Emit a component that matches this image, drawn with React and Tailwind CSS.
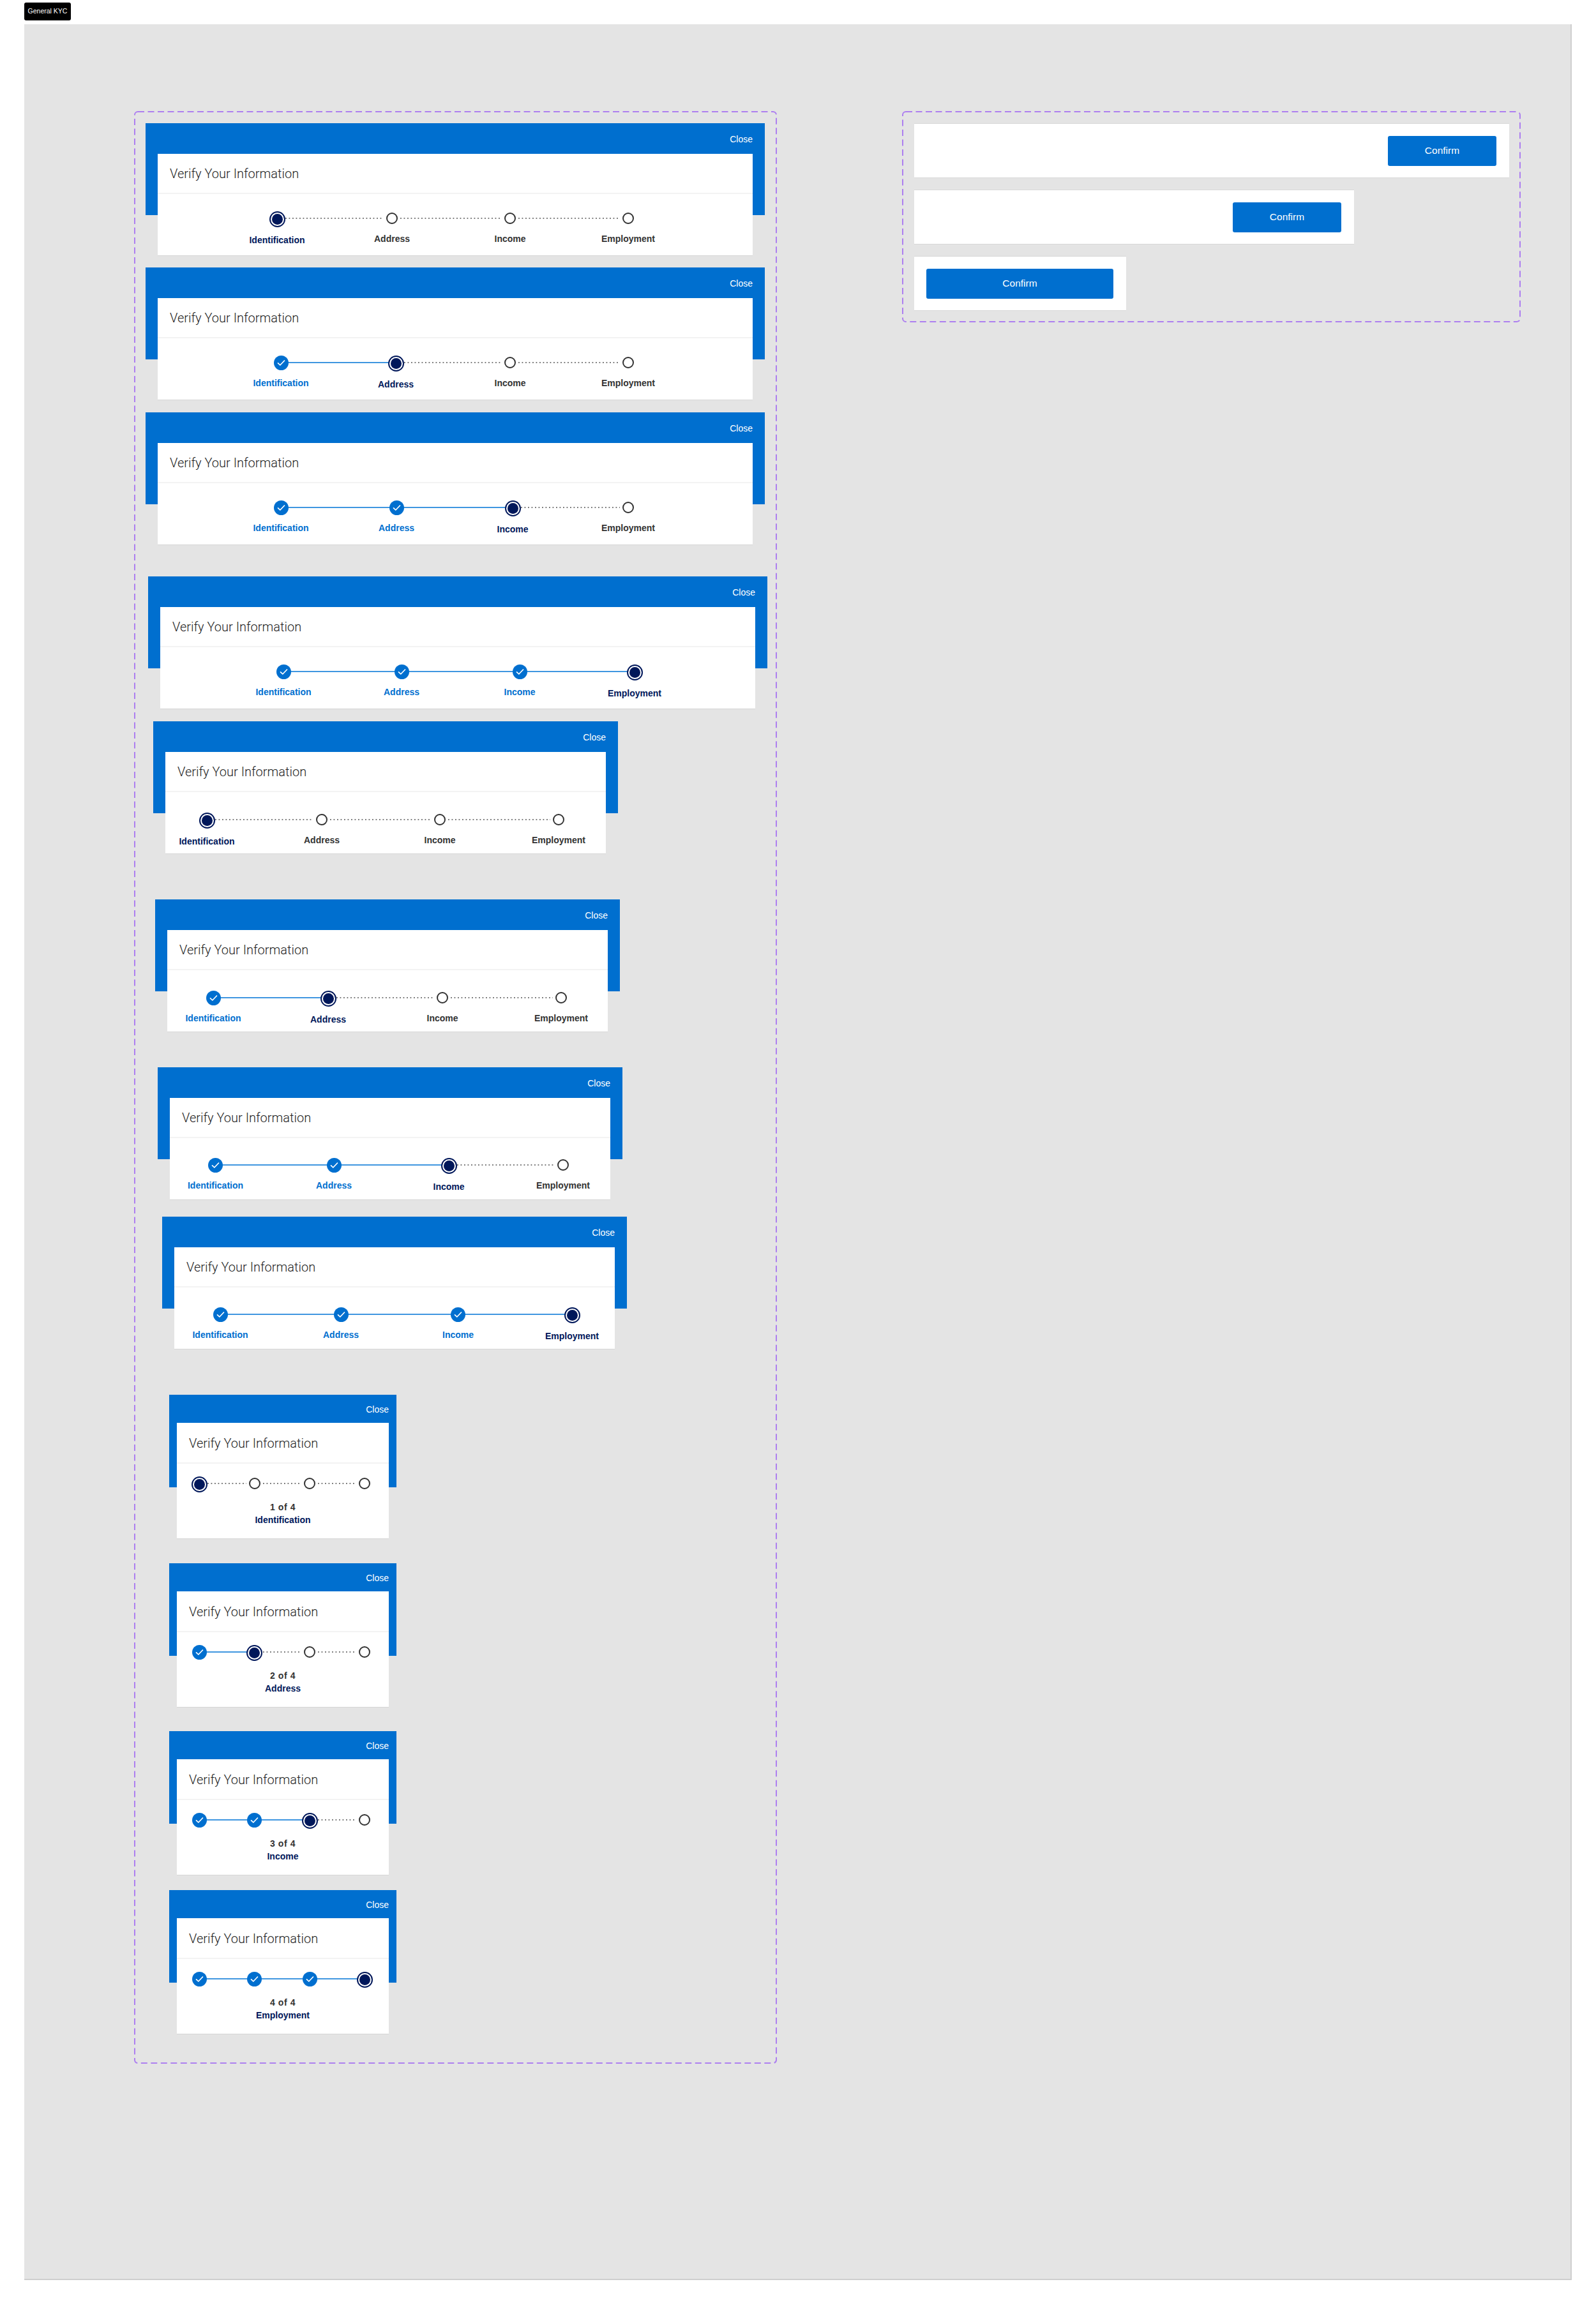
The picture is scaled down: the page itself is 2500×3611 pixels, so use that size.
import React from 'react';

const STEPS = ['Identification', 'Address', 'Income', 'Employment'];

const DashedFrame = () => (
  <svg className="absolute inset-0 w-full h-full pointer-events-none overflow-visible">
    <rect x="1" y="1" rx="5" fill="none" stroke="#ad7ff0" strokeWidth="2" strokeDasharray="10 5.5" style={{ width: 'calc(100% - 2px)', height: 'calc(100% - 2px)' }} />
  </svg>
);

const Dot = ({ state }) => {
  if (state === 'done') {
    return (
      <div className="w-[23px] h-[23px] rounded-full bg-[#006fcf] flex items-center justify-center">
        <svg width="13" height="11" viewBox="0 0 13 11" fill="none">
          <path d="M1.5 5.8 L4.8 9 L11.5 2" stroke="#fff" strokeWidth="1.7" strokeLinecap="round" strokeLinejoin="round" />
        </svg>
      </div>
    );
  }
  if (state === 'active') {
    return (
      <div className="w-[25px] h-[25px] rounded-full border-2 border-[#00175a] bg-white p-[2px] mt-[2px]">
        <div className="w-full h-full rounded-full bg-[#00175a]" />
      </div>
    );
  }
  return <div className="w-[18px] h-[18px] rounded-full border-2 border-[#333] bg-white" />;
};

const Connector = ({ width, solid }) => (
  <div className="h-[26px] flex items-center shrink-0" style={{ width }}>
    {solid ? (
      <div className="w-full h-[2px] bg-[#3f96e0]" />
    ) : (
      <div className="w-full h-[2px] mx-[13px] bg-[linear-gradient(to_right,#777_2px,transparent_2px)] bg-[length:5.5px_2px]" />
    )}
  </div>
);

const Stepper = ({ centers, active, showLabels = true }) => (
  <div className="flex items-start" style={{ marginLeft: centers[0] }}>
    {STEPS.map((label, i) => {
      const state = i < active ? 'done' : i === active ? 'active' : 'todo';
      const labelColor = state === 'done' ? 'text-[#006fcf]' : state === 'active' ? 'text-[#00175a]' : 'text-[#333]';
      return (
        <React.Fragment key={label}>
          <div className="w-0 flex flex-col items-center relative z-10">
            <div className="h-[26px] flex items-center justify-center">
              <Dot state={state} />
            </div>
            {showLabels && (
              <div className={`text-[14px] leading-[18px] font-bold whitespace-nowrap ${labelColor} ${state === 'active' ? 'mt-[12px]' : 'mt-[10px]'}`}>
                {label}
              </div>
            )}
          </div>
          {i < 3 && <Connector width={centers[i + 1] - centers[i]} solid={i < active} />}
        </React.Fragment>
      );
    })}
  </div>
);

const Header = ({ height, inset, closeTop }) => (
  <div className={`bg-[#006fcf] flex justify-end ${height} ${inset}`}>
    <span className={`text-[14px] leading-[18px] text-white ${closeTop}`}>Close</span>
  </div>
);

const Title = ({ height }) => (
  <div className={`flex items-center pl-[19px] pt-[1px] border-b-2 border-[#f3f3f3] ${height}`}>
    <h2 className="text-[20px] font-light text-[#222] font-['Roboto',sans-serif]">Verify Your Information</h2>
  </div>
);

// desktop 970px wide and tablet 728px wide modals share the same structure
const WideCard = ({ className, centers, active, bodyPad }) => (
  <div className={`h-[208px] ${className}`}>
    <Header height="h-[144px]" inset="pr-[19px]" closeTop="mt-[16px]" />
    <div className="relative -mt-[96px] mx-[19px] h-[160px] bg-white border-b border-[#d6d6d6]">
      <Title height="h-[63px]" />
      <div className={bodyPad}>
        <Stepper centers={centers} active={active} />
      </div>
    </div>
  </div>
);

const MobileCard = ({ className, active }) => (
  <div className={`w-[356px] h-[226px] ${className}`}>
    <Header height="h-[145px]" inset="pr-[12px]" closeTop="mt-[14px]" />
    <div className="relative -mt-[101px] mx-[12px] h-[182px] bg-white border-b border-[#d6d6d6]">
      <Title height="h-[64px]" />
      <div className="pt-[18px]">
        <Stepper centers={[35, 121.5, 208, 294]} active={active} showLabels={false} />
        <div className="mt-[14px] text-center text-[14px] font-bold">
          <div className="leading-[20px] text-[#333] tracking-[0.6px]">{active + 1} of 4</div>
          <div className="leading-[21px] text-[#00175a]">{STEPS[active]}</div>
        </div>
      </div>
    </div>
  </div>
);

const ConfirmButton = ({ className }) => (
  <button className={`h-[47px] bg-[#006fcf] rounded-[3px] text-white text-[15.5px] ${className}`}>Confirm</button>
);

const ConfirmPanel = ({ className, children }) => (
  <div className={`h-[86px] bg-white border-y border-[#d8d8d8] flex items-center pl-[19px] pr-[20px] ${className}`}>
    {children}
  </div>
);

export default function App() {
  return (
    <div className="min-h-[3611px] bg-white pl-[38px] pt-[4px] font-['Liberation_Sans',Arial,sans-serif]">
      <div className="w-[73px] h-[28px] bg-black rounded-[3px] text-white text-[10.5px] flex items-center justify-center">General KYC</div>

      <div className="mt-[6px] w-[2424px] h-[3534px] bg-[#e4e4e4] border-r-2 border-b-2 border-[#cfcfcf] pl-[172px] pt-[136px] flex items-start">
        {/* left frame: modal variants */}
        <div className="relative w-[1007px] pb-[46px] flex flex-col items-start">
          <DashedFrame />
          <WideCard className="w-[970px] mt-[19px] ml-[18px]" centers={[187, 367, 552, 737]} active={0} bodyPad="pt-[25px]" />
          <WideCard className="w-[970px] mt-[18px] ml-[18px]" centers={[193, 373, 552, 737]} active={1} bodyPad="pt-[25px]" />
          <WideCard className="w-[970px] mt-[19px] ml-[18px]" centers={[193, 374, 556, 737]} active={2} bodyPad="pt-[25px]" />
          <WideCard className="w-[970px] mt-[49px] ml-[22px]" centers={[193, 378, 563, 743]} active={3} bodyPad="pt-[25px]" />
          <WideCard className="w-[728px] mt-[19px] ml-[30px]" centers={[65, 245, 430, 616]} active={0} bodyPad="pt-[30px]" />
          <WideCard className="w-[728px] mt-[71px] ml-[33px]" centers={[72, 252, 431, 617]} active={1} bodyPad="pt-[30px]" />
          <WideCard className="w-[728px] mt-[55px] ml-[37px]" centers={[71.5, 257, 437, 616]} active={2} bodyPad="pt-[29px]" />
          <WideCard className="w-[728px] mt-[26px] ml-[44px]" centers={[72, 261, 444.5, 623]} active={3} bodyPad="pt-[29px]" />
          <MobileCard className="mt-[71px] ml-[55px]" active={0} />
          <MobileCard className="mt-[38px] ml-[55px]" active={1} />
          <MobileCard className="mt-[37px] ml-[55px]" active={2} />
          <MobileCard className="mt-[23px] ml-[55px]" active={3} />
        </div>

        {/* right frame: footer button variants */}
        <div className="relative ml-[196px] w-[969px] pt-[19px] pb-[18px] pl-[19px] flex flex-col gap-[18px]">
          <DashedFrame />
          <ConfirmPanel className="w-[932px] justify-end">
            <ConfirmButton className="w-[170px]" />
          </ConfirmPanel>
          <ConfirmPanel className="w-[689px] justify-end">
            <ConfirmButton className="w-[170px]" />
          </ConfirmPanel>
          <ConfirmPanel className="w-[332px]">
            <ConfirmButton className="w-full" />
          </ConfirmPanel>
        </div>
      </div>
    </div>
  );
}
